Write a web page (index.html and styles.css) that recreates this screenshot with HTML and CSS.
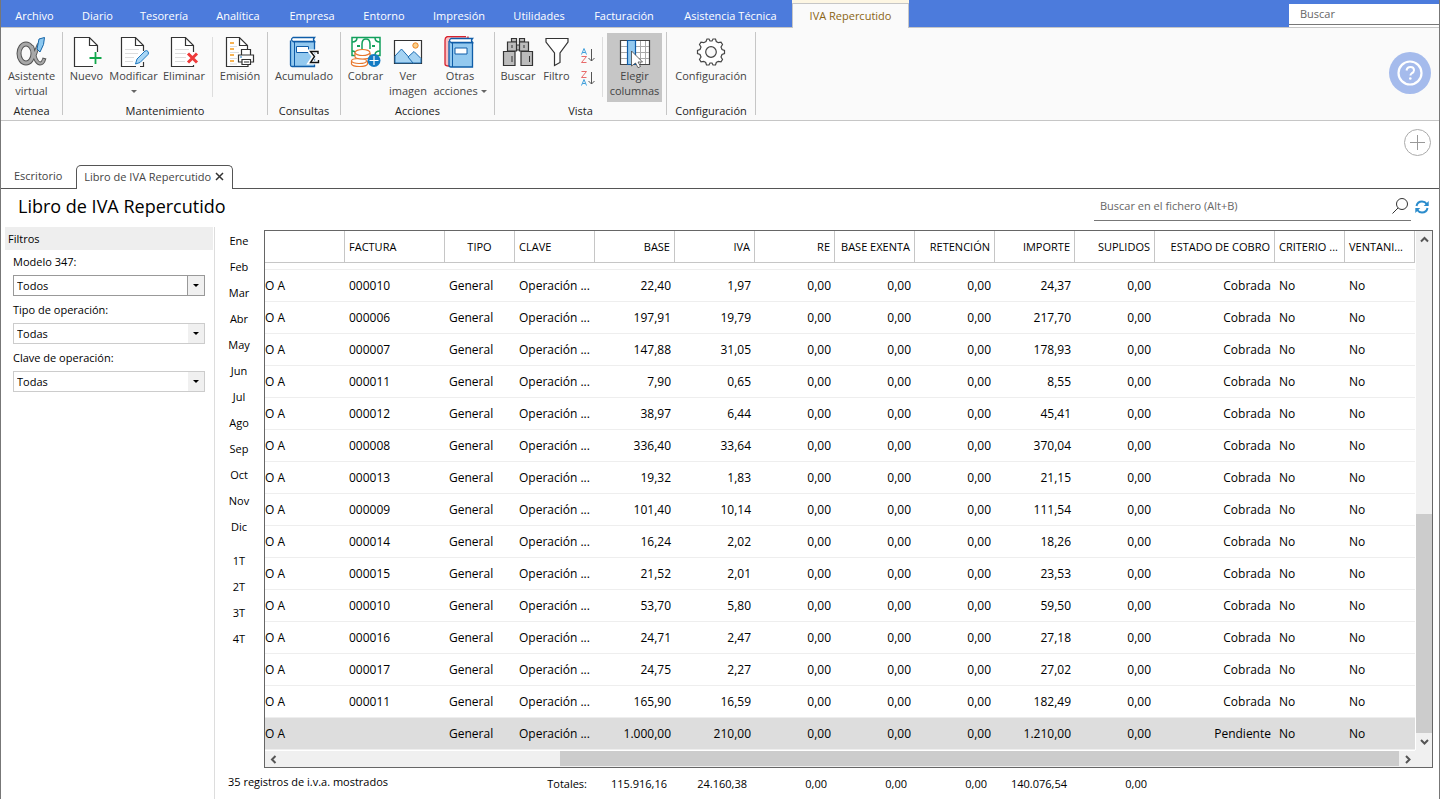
FILE: index.html
```html
<!DOCTYPE html>
<html lang="es">
<head>
<meta charset="utf-8">
<title>Libro de IVA Repercutido</title>
<link rel="stylesheet" href="styles.css">
</head>
<body>
<div class="app">
  <nav class="menubar">
    <button class="menu m67">Archivo</button>
    <button class="menu m59">Diario</button>
    <button class="menu m74">Tesorería</button>
    <button class="menu m74">Analítica</button>
    <button class="menu m74">Empresa</button>
    <button class="menu m70">Entorno</button>
    <button class="menu m80">Impresión</button>
    <button class="menu m80">Utilidades</button>
    <button class="menu m90">Facturación</button>
    <button class="menu m123">Asistencia Técnica</button>
    <button class="menu m117 menu-active">IVA Repercutido</button>
    <div class="menu-search"><input type="text" placeholder="Buscar" aria-label="Buscar"></div>
  </nav>

  <div class="ribbon">
    <section class="group g-atenea">
      <div class="tools">
        <button class="tool">
          <svg class="icon" viewBox="0 0 32 32"><g fill="none" stroke="#555" stroke-width="5"><ellipse cx="11" cy="17.500" rx="7" ry="9.500"/><path d="M24 8Q21 15 19 21M17 10C18.500 16 20 27 25 27.500Q28 27.500 29.500 22" stroke-width="4"/></g><g fill="none" stroke="#a8a8a8" stroke-width="3"><ellipse cx="11" cy="17.500" rx="7" ry="9.500"/><path d="M24 8Q21 15 19 21M17 10C18.500 16 20 27 25 27.500Q28 27.500 29 23" stroke-width="2.200"/></g><path d="M24 3l5.500-1.500-1 7-3.500 7.500-3-3z" fill="#8cc8f0" stroke="#1565a8"/></svg>
          <span>Asistente<br>virtual</span>
        </button>
      </div>
      <h2>Atenea</h2>
    </section>
    <section class="group g-mant">
      <div class="tools">
        <button class="tool w46">
          <svg class="icon" viewBox="0 0 32 32"><path d="M26.500 16V9.500L18.500 1.500H3.500V30.500H22M18.500 1.500V9.500H26.500" fill="#fff" stroke="#333" stroke-width="1.200"/><path d="M24.500 16v12M18.500 22h12" stroke="#12a84c" stroke-width="1.800"/></svg>
          <span>Nuevo</span>
        </button>
        <button class="tool w48">
          <svg class="icon" viewBox="0 0 32 32"><path d="M25.500 15V9.500L17.500 1.500H3.500V30.500H18M17.500 1.500V9.500H25.500M22 30.500h3.500V26" fill="#fff" stroke="#333" stroke-width="1.200"/><path d="M7 13.500h14M7 17.500h13M7 21.500h9M7 25.500h8" stroke="#ddd"/><path d="M17.500 28l1.500-5 8-8q2-1 3 .5t0 3l-8 8z" fill="#a9d6f5" stroke="#1c78c0"/></svg>
          <span>Modificar</span><i class="caret"></i>
        </button>
        <button class="tool w53">
          <svg class="icon" viewBox="0 0 32 32"><path d="M25.500 16V9.500L17.500 1.500H3.500V30.500H25.500V29M17.500 1.500V9.500H25.500" fill="#fff" stroke="#333" stroke-width="1.200"/><path d="M7 13.500h14M7 17.500h11M7 21.500h11M7 25.500h10" stroke="#ddd"/><path d="M20 17.500l9 9M29 17.500l-9 9" stroke="#ee3a3a" stroke-width="3"/></svg>
          <span>Eliminar</span>
        </button>
        <i class="sep"></i>
        <button class="tool w53">
          <svg class="icon" viewBox="0 0 32 32"><path d="M23.500 13V9.500L15.500 1.500H2.500V30.500H24V28M15.500 1.500V9.500H23.500" fill="#fff" stroke="#333" stroke-width="1.200"/><path d="M6 7h4M6 13h4M6 19h4M6 25h4" stroke="#f59a1b" stroke-width="1.500"/><path d="M6 10.500h7M6 16.500h9M6 22.500h7M6 28h7" stroke="#ddd"/><path d="M17.500 19V13.500h9V19M17.500 26H14.500V19h15v7h-3M18 23.500h8.500v5H18zM20 26h5" fill="#fff" stroke="#333" stroke-width="1.200"/><path d="M16 21h2" stroke="#1c78c0"/></svg>
          <span>Emisión</span>
        </button>
      </div>
      <h2>Mantenimiento</h2>
    </section>
    <section class="group g-cons">
      <div class="tools">
        <button class="tool">
          <svg class="icon" viewBox="0 0 32 32"><path d="M2.500 4.500V29q0 1.500 1.500 1.500H26.500V5.500H5" fill="#93c9ef" stroke="#0f5da8" stroke-width="1.300"/><path d="M26.500 1.500H5q-3 2 0 4H26.500q-2-2 0-4z" fill="#fff" stroke="#0f5da8" stroke-width="1.300"/><path d="M6.500 6v24" stroke="#0f5da8"/><path d="M8.500 10.500h12v6h-12z" fill="#fff" stroke="#0f5da8"/><path d="M30 18V15.500H22L26 20.500L22 26.500H30V24" fill="none" stroke="#fff" stroke-width="4"/><path d="M30 18V15.500H22.500L26.500 20.500L22.500 26.500H30.500V24" fill="none" stroke="#111" stroke-width="1.400"/></svg>
          <span>Acumulado</span>
        </button>
      </div>
      <h2>Consultas</h2>
    </section>
    <section class="group g-acc">
      <div class="tools">
        <button class="tool w41">
          <svg class="icon" viewBox="0 0 32 32"><path d="M2 1.500h28v18H2z" fill="#fff" stroke="#12a05c" stroke-width="1.500"/><path d="M2 6q5 0 5-4.500M25 1.500q0 4.500 5 4.500M12 13V8q0-5 4-5t4 5v5M2 15q4 0 4 4M25 19q0-4 5-4" fill="none" stroke="#12a05c" stroke-width="1.500"/><path d="M7 10h3M22 10h3" stroke="#12a05c" stroke-width="2"/><g fill="#fff" stroke="#e8772e" stroke-width="1.200"><path d="M1.500 25v3q1 2.500 8 2.500t8-2.500v-3"/><ellipse cx="9" cy="25" rx="7.500" ry="2.500"/><path d="M5 17v4q1 2 7.500 2T20 21v-4"/><ellipse cx="12.500" cy="16.500" rx="7.500" ry="3"/></g><circle cx="24" cy="24.500" r="6.500" fill="#147cc4"/><path d="M24 20v9M19.500 24.500h9" stroke="#fff" stroke-width="1.200"/></svg>
          <span>Cobrar</span>
        </button>
        <button class="tool w44">
          <svg class="icon" viewBox="0 0 32 32"><path d="M2.500 4.500h27v23h-27z" fill="#fff" stroke="#333" stroke-width="1.200"/><path d="M3 20l6.500-7L22 27H3z" fill="#a5d3f3" stroke="#1c6cb0"/><path d="M16 21l6-5.500 7 7V27H21z" fill="#a5d3f3" stroke="#1c6cb0"/><circle cx="23.500" cy="9.500" r="2.700" fill="#fbd08b" stroke="#ee8522"/></svg>
          <span>Ver<br>imagen</span>
        </button>
        <button class="tool w60">
          <svg class="icon" viewBox="0 0 32 32"><path d="M22 .5H3.500Q1 1 1 4v24q0 2 4 2M6 5h18V.5" fill="#f7c0c4" stroke="#d8232e" stroke-width="1.300"/><path d="M5 5V29q0 2 2 2H28.500V6.500H7" fill="#93c9ef" stroke="#0f5da8" stroke-width="1.300"/><path d="M28.500 2.500H7q-3 2 0 4H28.500q-2-2 0-4z" fill="#fff" stroke="#0f5da8" stroke-width="1.300"/><path d="M8.500 7v24" stroke="#0f5da8"/><path d="M11 12h12v6H11z" fill="#fff" stroke="#0f5da8"/></svg>
          <span>Otras<br>acciones <i class="caret caret-inline"></i></span>
        </button>
      </div>
      <h2>Acciones</h2>
    </section>
    <section class="group g-vista">
      <div class="tools">
        <button class="tool w40">
          <svg class="icon" viewBox="0 0 32 32"><g fill="#bcbcbc" stroke="#333" stroke-width="1.200"><path d="M9.500 2.500h5V6h-5zM17.500 2.500h5V6h-5zM14 9h4v5h-4z"/><path d="M5.500 6h9v9h-9zM17.500 6h9v9h-9zM1.500 15.500H13v14H1.500zM19 15.500h11.500v14H19z"/></g><path d="M10 20v6M27.500 20v6M10 9v3M22 9v3" stroke="#333"/></svg>
          <span>Buscar</span>
        </button>
        <button class="tool w37">
          <svg class="icon" viewBox="0 0 32 32"><path d="M5 2.500H27V6L19 17v9.500L13.500 29.500V17L5 6z" fill="#fff" stroke="#333" stroke-width="1.200"/></svg>
          <span>Filtro</span>
        </button>
        <div class="sorts">
          <button class="sort" aria-label="Ordenar ascendente"><svg viewBox="0 0 16 18"><path d="M1.500 7.500L4 1.500l2.500 6M2.500 5.500h3" fill="none" stroke="#3f9fdc"/><path d="M1.500 9.500h5l-5 6h5" fill="none" stroke="#e86a6a"/><path d="M11.500 2v12M8.500 11l3 3 3-3" fill="none" stroke="#555"/></svg></button>
          <button class="sort" aria-label="Ordenar descendente"><svg viewBox="0 0 16 18"><path d="M1.500 1.500h5l-5 6h5" fill="none" stroke="#e86a6a"/><path d="M1.500 15.500L4 9.500l2.500 6M2.500 13.500h3" fill="none" stroke="#3f9fdc"/><path d="M11.500 2v12M8.500 11l3 3 3-3" fill="none" stroke="#555"/></svg></button>
        </div>
        <i class="sep"></i>
        <button class="tool w55 tool-on" aria-pressed="true">
          <svg class="icon" viewBox="0 0 32 32"><path d="M1.500 4.500h29v24h-29z" fill="#fff" stroke="#444" stroke-width="1.200"/><path d="M2 10.500h28M2 16.500h28M2 22.500h28M21.500 5v23M26.500 5v23" stroke="#aaa"/><path d="M8.500 4.500h8v24h-8z" fill="#93c9ef" stroke="#0f5da8" stroke-width="1.200"/><path d="M12.500 15l11 11h-4.500l2.500 4.500-2.500 1.200-2.500-4.700-4 3z" fill="#fff" stroke="#444" stroke-width=".8"/></svg>
          <span>Elegir<br>columnas</span>
        </button>
      </div>
      <h2>Vista</h2>
    </section>
    <section class="group g-conf">
      <div class="tools">
        <button class="tool">
          <svg class="icon" viewBox="0 0 32 32"><path d="M11 5.500L12 3h2l1 2h2l1-2h2.500l.8 2.500 2 1.200 2.700-.5 1.500 2.300L26 11l1 2.500 2.500 1v3L27 18.500 26 21l1.500 2.500-1.500 2.300-2.700-.5-2 1.200-.8 2.500H18l-1-2h-2l-1 2h-2.500L10.700 26.500l-2-1.200-2.700.5L4.500 23.500 6 21l-1-2.500-2.500-1v-3L5 13.500 6 11 4.500 8.500 6 6.200l2.700.5z" fill="#fff" stroke="#444" stroke-width="1.200"/><circle cx="16" cy="16" r="5.300" fill="#fafafa" stroke="#444" stroke-width="1.200"/></svg>
          <span>Configuración</span>
        </button>
      </div>
      <h2>Configuración</h2>
    </section>
    <button class="help" aria-label="Ayuda"><svg viewBox="0 0 42 42"><circle cx="21" cy="21" r="21" fill="#a5bbec"/><circle cx="21" cy="21" r="11.500" fill="none" stroke="#fff" stroke-width="2.200"/><path d="M17.500 18.500Q18 15 21.500 15q3.500 0 3.500 3.300 0 2-2.500 3.200-1 .6-1 2" fill="none" stroke="#fff" stroke-width="2"/><circle cx="21.300" cy="26.500" r="1.300" fill="#fff"/></svg></button>
  </div>

  <div class="addbar"><button class="add" aria-label="Añadir"><svg viewBox="0 0 27 27"><circle cx="13.500" cy="13.500" r="13" fill="none" stroke="#aaa"/><path d="M13.500 6v15M6 13.500h15" stroke="#999"/></svg></button></div>

  <div class="doctabs">
    <button class="doctab">Escritorio</button>
    <button class="doctab doctab-on">Libro de IVA Repercutido <svg viewBox="0 0 9 9"><path d="M1 1l7 7M8 1l-7 7" stroke="#333" stroke-width="1.500"/></svg></button>
    <div class="doctab-fill"></div>
  </div>

  <header class="titlebar">
    <h1>Libro de IVA Repercutido</h1>
    <div class="filesearch">
      <input type="text" placeholder="Buscar en el fichero (Alt+B)" aria-label="Buscar en el fichero">
      <button class="plain" aria-label="Buscar"><svg width="18" height="18" viewBox="0 0 18 18"><circle cx="11" cy="7" r="5.500" fill="none" stroke="#333"/><path d="M7 11l-5.500 5.500" stroke="#333"/></svg></button>
    </div>
    <button class="plain refresh" aria-label="Actualizar"><svg width="14" height="14" viewBox="0 0 14 14"><path d="M1.500 6Q2.500 1.500 7 1.500q3 0 4.800 2.500M12.500 8Q11.500 12.500 7 12.500q-3 0-4.800-2.500" fill="none" stroke="#2b8ccc" stroke-width="2"/><path d="M13.700 1v5H8.700zM.3 13V8h5z" fill="#2b8ccc"/></svg></button>
  </header>

  <main class="work">
    <aside class="filters">
      <h3>Filtros</h3>
      <div class="field"><label for="f1">Modelo 347:</label><div class="combo combo-focus"><select id="f1"><option>Todos</option></select></div></div>
      <div class="field"><label for="f2">Tipo de operación:</label><div class="combo"><select id="f2"><option>Todas</option></select></div></div>
      <div class="field"><label for="f3">Clave de operación:</label><div class="combo"><select id="f3"><option>Todas</option></select></div></div>
    </aside>

    <nav class="periods">
      <button>Ene</button><button>Feb</button><button>Mar</button><button>Abr</button><button>May</button><button>Jun</button><button>Jul</button><button>Ago</button><button>Sep</button><button>Oct</button><button>Nov</button><button>Dic</button>
      <button class="first-quarter">1T</button><button>2T</button><button>3T</button><button>4T</button>
    </nav>

    <div class="data">
      <div class="grid">
        <div class="tablebox">
          <table>
            <colgroup><col class="c80"><col class="c100"><col class="c70"><col class="c80"><col class="c80"><col class="c80"><col class="c80"><col class="c80"><col class="c80"><col class="c80"><col class="c80"><col class="c120"><col class="c70"><col class="c70"></colgroup>
            <thead><tr><th></th><th>FACTURA</th><th class="mid">TIPO</th><th>CLAVE</th><th class="n">BASE</th><th class="n">IVA</th><th class="n">RE</th><th class="n">BASE EXENTA</th><th class="n">RETENCIÓN</th><th class="n">IMPORTE</th><th class="n">SUPLIDOS</th><th class="n">ESTADO DE COBRO</th><th>CRITERIO ...</th><th>VENTANI...</th></tr></thead>
            <tbody>
              <tr class="cut"><td colspan="14"></td></tr>
              <tr><td>O A</td><td>000010</td><td>General</td><td>Operación ...</td><td>22,40</td><td>1,97</td><td>0,00</td><td>0,00</td><td>0,00</td><td>24,37</td><td>0,00</td><td>Cobrada</td><td>No</td><td>No</td></tr>
              <tr><td>O A</td><td>000006</td><td>General</td><td>Operación ...</td><td>197,91</td><td>19,79</td><td>0,00</td><td>0,00</td><td>0,00</td><td>217,70</td><td>0,00</td><td>Cobrada</td><td>No</td><td>No</td></tr>
              <tr><td>O A</td><td>000007</td><td>General</td><td>Operación ...</td><td>147,88</td><td>31,05</td><td>0,00</td><td>0,00</td><td>0,00</td><td>178,93</td><td>0,00</td><td>Cobrada</td><td>No</td><td>No</td></tr>
              <tr><td>O A</td><td>000011</td><td>General</td><td>Operación ...</td><td>7,90</td><td>0,65</td><td>0,00</td><td>0,00</td><td>0,00</td><td>8,55</td><td>0,00</td><td>Cobrada</td><td>No</td><td>No</td></tr>
              <tr><td>O A</td><td>000012</td><td>General</td><td>Operación ...</td><td>38,97</td><td>6,44</td><td>0,00</td><td>0,00</td><td>0,00</td><td>45,41</td><td>0,00</td><td>Cobrada</td><td>No</td><td>No</td></tr>
              <tr><td>O A</td><td>000008</td><td>General</td><td>Operación ...</td><td>336,40</td><td>33,64</td><td>0,00</td><td>0,00</td><td>0,00</td><td>370,04</td><td>0,00</td><td>Cobrada</td><td>No</td><td>No</td></tr>
              <tr><td>O A</td><td>000013</td><td>General</td><td>Operación ...</td><td>19,32</td><td>1,83</td><td>0,00</td><td>0,00</td><td>0,00</td><td>21,15</td><td>0,00</td><td>Cobrada</td><td>No</td><td>No</td></tr>
              <tr><td>O A</td><td>000009</td><td>General</td><td>Operación ...</td><td>101,40</td><td>10,14</td><td>0,00</td><td>0,00</td><td>0,00</td><td>111,54</td><td>0,00</td><td>Cobrada</td><td>No</td><td>No</td></tr>
              <tr><td>O A</td><td>000014</td><td>General</td><td>Operación ...</td><td>16,24</td><td>2,02</td><td>0,00</td><td>0,00</td><td>0,00</td><td>18,26</td><td>0,00</td><td>Cobrada</td><td>No</td><td>No</td></tr>
              <tr><td>O A</td><td>000015</td><td>General</td><td>Operación ...</td><td>21,52</td><td>2,01</td><td>0,00</td><td>0,00</td><td>0,00</td><td>23,53</td><td>0,00</td><td>Cobrada</td><td>No</td><td>No</td></tr>
              <tr><td>O A</td><td>000010</td><td>General</td><td>Operación ...</td><td>53,70</td><td>5,80</td><td>0,00</td><td>0,00</td><td>0,00</td><td>59,50</td><td>0,00</td><td>Cobrada</td><td>No</td><td>No</td></tr>
              <tr><td>O A</td><td>000016</td><td>General</td><td>Operación ...</td><td>24,71</td><td>2,47</td><td>0,00</td><td>0,00</td><td>0,00</td><td>27,18</td><td>0,00</td><td>Cobrada</td><td>No</td><td>No</td></tr>
              <tr><td>O A</td><td>000017</td><td>General</td><td>Operación ...</td><td>24,75</td><td>2,27</td><td>0,00</td><td>0,00</td><td>0,00</td><td>27,02</td><td>0,00</td><td>Cobrada</td><td>No</td><td>No</td></tr>
              <tr><td>O A</td><td>000011</td><td>General</td><td>Operación ...</td><td>165,90</td><td>16,59</td><td>0,00</td><td>0,00</td><td>0,00</td><td>182,49</td><td>0,00</td><td>Cobrada</td><td>No</td><td>No</td></tr>
              <tr class="selected"><td>O A</td><td></td><td>General</td><td>Operación ...</td><td>1.000,00</td><td>210,00</td><td>0,00</td><td>0,00</td><td>0,00</td><td>1.210,00</td><td>0,00</td><td>Pendiente</td><td>No</td><td>No</td></tr>
            </tbody>
          </table>
        </div>
        <div class="vbar">
          <button aria-label="Subir"><svg viewBox="0 0 9 9"><path d="M1 6.500L4.500 3 8 6.500"/></svg></button>
          <div class="vtrack"></div><div class="vthumb"></div>
          <button aria-label="Bajar"><svg viewBox="0 0 9 9"><path d="M1 3l3.500 3.500L8 3"/></svg></button>
        </div>
        <div class="hbar">
          <button aria-label="Izquierda"><svg viewBox="0 0 9 9"><path d="M6.500 1L3 4.500 6.500 8"/></svg></button>
          <div class="htrack"></div><div class="hthumb"></div>
          <button aria-label="Derecha"><svg viewBox="0 0 9 9"><path d="M3 1l3.500 3.500L3 8"/></svg></button>
        </div>
        <div class="corner"></div>
      </div>
      <footer class="summary">
        <span class="count">35 registros de i.v.a. mostrados</span>
        <span class="total">Totales:</span><span class="total">115.916,16</span><span class="total">24.160,38</span><span class="total">0,00</span><span class="total">0,00</span><span class="total">0,00</span><span class="total">140.076,54</span><span class="total">0,00</span>
      </footer>
    </div>
  </main>
</div>
</body>
</html>
```
FILE: styles.css
```css
* { box-sizing: border-box; }
body { margin: 0; background: #fff; color: #000; font: 11px/15px "Open Sans", "Noto Sans", sans-serif; }
button, input, select { font: inherit; color: inherit; margin: 0; padding: 0; border: 0; background: none; border-radius: 0; }
h1, h2, h3 { margin: 0; font-weight: 400; font-size: inherit; }
.app { min-height: 100vh; display: flex; flex-direction: column; border-left: 1px solid #777; border-right: 1px solid #777; }

.menubar { display: flex; height: 28px; background: #4c7bdc; border-bottom: 1px solid #c6c6c6; color: #fff; }
.menu { flex: none; padding-top: 4px; white-space: nowrap; }
.m59 { width: 59px; } .m67 { width: 67px; } .m70 { width: 70px; } .m74 { width: 74px; } .m80 { width: 80px; }
.m90 { width: 90px; } .m117 { width: 117px; } .m123 { width: 123px; }
.menu-active { height: 25px; margin-top: 3px; padding: 0 0 1px; background: #fafafa; border: 1px solid #c6c6c6; border-bottom: 0; color: #8a6414; box-shadow: 0 -3px #fdf6e3; }
.menu-search { margin: 4px 0 0 auto; width: 150px; background: #fff; }
.menu-search input { display: block; width: 100%; height: 21px; padding: 0 11px 2px; border-bottom: 1px solid #777; }
input::placeholder { color: #666; opacity: 1; }

.ribbon { display: flex; height: 93px; background: #fafafa; border-bottom: 1px solid #c6c6c6; color: #444; padding: 4px 8px 5px 0; }
.group { display: flex; flex-direction: column; border-right: 1px solid #c6c6c6; padding-top: 1px; }
.group h2 { color: #222; text-align: center; margin-top: 2px; line-height: 14px; }
.g-atenea { width: 62px; }
.g-mant { width: 205px; }
.g-cons { width: 73px; }
.g-acc { width: 154px; }
.g-vista { width: 172px; }
.g-conf { width: 89px; }
.tools { flex: none; display: flex; justify-content: center; height: 69px; }
.g-vista .tools { justify-content: flex-start; padding-left: 3px; }
.tool { display: flex; flex-direction: column; align-items: center; padding-top: 3px; white-space: nowrap; }
.icon { width: 32px; height: 32px; flex: none; }
.tool-on { background: #c6c6c6; }
.w37 { width: 37px; } .w40 { width: 40px; } .w41 { width: 41px; } .w44 { width: 44px; } .w46 { width: 46px; }
.w48 { width: 48px; } .w53 { width: 53px; } .w55 { width: 55px; } .w60 { width: 60px; }
.caret { margin-top: 7px; border: 3px solid transparent; border-top-color: #666; border-bottom: 0; }
.caret-inline { display: inline-block; margin: 0 0 2px; }
.sep { width: 1px; height: 60px; margin: 4px 1px 0; background: #ddd; }
.g-vista .sep { margin: 4px 4px 0 2px; }
.sorts { width: 25px; padding-top: 14px; display: flex; flex-direction: column; align-items: center; gap: 5px; }
.sort svg { display: block; width: 16px; height: 18px; }
.help { margin: -1px 0 0 auto; align-self: center; width: 42px; height: 42px; }
.help svg, .add svg { display: block; }

.addbar { height: 44px; padding: 8px 8px 0; display: flex; justify-content: flex-end; }
.add { width: 27px; height: 27px; }

.doctabs { display: flex; height: 24px; color: #444; }
.doctab { border-bottom: 1px solid #555; padding: 0 14px 2px 13px; white-space: nowrap; }
.doctab-on { border: 1px solid #555; border-bottom: 0; border-radius: 5px 5px 0 0; padding: 0 8px 2px 7px; display: flex; align-items: center; gap: 4px; }
.doctab-on svg { width: 9px; height: 9px; }
.doctab-fill { flex: 1; border-bottom: 1px solid #555; }

.titlebar { display: flex; height: 38px; padding: 0 10px 0 17px; }
.titlebar h1 { font-size: 18px; line-height: 34px; }
.filesearch { display: flex; align-items: center; margin-left: auto; width: 317px; height: 32px; padding: 3px 2px 0 6px; border-bottom: 1px solid #777; }
.filesearch input { flex: 1; min-width: 0; padding-bottom: 2px; }
.plain { display: flex; align-items: center; }
.refresh { height: 36px; margin-left: 4px; }

.work { flex: 1; display: flex; padding-right: 6px; }
.filters { width: 214px; padding: 0 1px 0 4px; border-right: 1px solid #ddd; }
.filters h3 { height: 23px; line-height: 24px; padding-left: 3px; background: #eee; margin-bottom: 3px; }
.field { height: 48px; padding: 0 8px; }
.field label { display: block; height: 22px; line-height: 17px; }
.combo { position: relative; border: 1px solid #ccc; height: 21px; }
.combo select { display: block; width: 100%; height: 19px; padding: 0 20px 0 3px; appearance: none; background: linear-gradient(#f0f0f0, #f0f0f0) right / 16px 100% no-repeat; }
.combo::after { content: ""; position: absolute; right: 5px; top: 8px; border: 3px solid transparent; border-top-color: #000; border-bottom: 0; pointer-events: none; }
.combo-focus { border-color: #999; }
.combo-focus select { background: linear-gradient(#999, #999) right 16px top / 1px 100% no-repeat, linear-gradient(#f0f0f0, #f0f0f0) right / 16px 100% no-repeat; }
.periods { width: 49px; padding-right: 1px; display: flex; flex-direction: column; }
.periods button { height: 26px; flex: none; }
.periods .first-quarter { margin-top: 8px; }

.data { flex: 1; min-width: 0; padding-top: 3px; }
.grid { display: grid; grid-template-columns: 1fr 17px; grid-template-rows: auto 17px; border: 1px solid #666; }
.tablebox { min-width: 0; overflow: hidden; }
table { width: 100%; table-layout: fixed; border-collapse: separate; border-spacing: 0; font-size: 12px; }
.c70 { width: 70px; } .c80 { width: 80px; } .c100 { width: 100px; } .c120 { width: 120px; }
th, td { padding: 0 4px; height: 32px; text-align: left; font-weight: 400; white-space: nowrap; overflow: hidden; }
th { font-size: 11px; border-right: 1px solid #c6c6c6; border-bottom: 1px solid #c6c6c6; }
td { border-bottom: 1px solid #eee; }
th.n, td:nth-child(n+5):nth-child(-n+12) { text-align: right; }
th.mid { text-align: center; }
td:first-child { padding-left: 0; }
.cut td { height: 7px; }
.selected td { background: #ddd; }
.vbar { display: flex; flex-direction: column; background: #f0f0f0; margin-left: 1px; }
.vbar button, .hbar button { flex: none; width: 16px; height: 17px; display: flex; align-items: center; justify-content: center; }
.vbar svg, .hbar svg { width: 9px; height: 9px; fill: none; stroke: #555; stroke-width: 2; }
.vtrack { flex: 266; }
.vthumb { flex: 219; background: #ccc; }
.hbar { display: flex; background: #f0f0f0; padding-bottom: 1px; margin-top: 1px; }
.htrack { flex: 279; }
.hthumb { flex: 839; background: #ccc; }
.corner { background: #f0f0f0; }

.summary { display: flex; padding: 6px 286px 0 0; line-height: 17px; }
.count { width: 246px; margin: -1px 0 0 -36px; white-space: nowrap; }
.total { width: 80px; padding-top: 1px; text-align: right; }
.summary .total:nth-child(2) { margin-left: auto; }
```
